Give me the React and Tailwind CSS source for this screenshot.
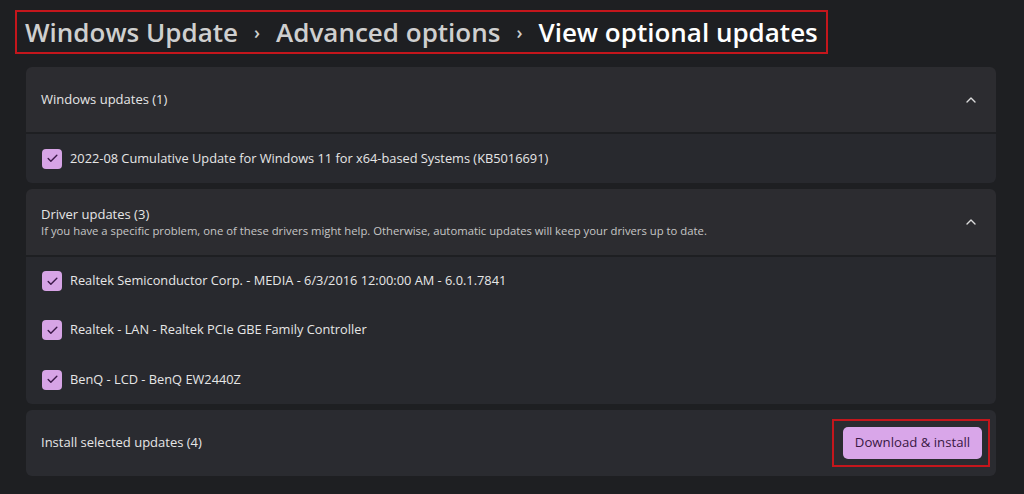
import { ChevronUp, Check } from "lucide-react";

function Box({ checked = true }) {
  return (
    <span className="flex h-[20px] w-[20px] shrink-0 items-center justify-center rounded-[4px] bg-[#d7a4e6]">
      {checked && <Check size={13} strokeWidth={2.6} className="text-[#3b1848]" />}
    </span>
  );
}

function Row({ children }) {
  return (
    <div className="flex items-center gap-[8px] pl-[16px] text-[12.8px] text-[#e6e6e6]">
      <Box />
      <span>{children}</span>
    </div>
  );
}

export default function App() {
  return (
    <div
      className="h-[494px] w-[1024px] overflow-hidden bg-[#1e1f22]"
      style={{ fontFamily: '"Segoe UI", "Open Sans", sans-serif' }}
    >
      <div className="pl-[15px] pt-[10px]">
        <div className="inline-flex h-[44px] items-center gap-[16px] border-2 border-[#c4161c] pl-[8px] pr-[8px] text-[26px] font-semibold">
          <span className="text-[#cfcfcf]">Windows Update</span>
          <span className="text-[18px] text-[#cfcfcf]">›</span>
          <span className="text-[#cfcfcf]">Advanced options</span>
          <span className="text-[18px] text-[#cfcfcf]">›</span>
          <span className="text-white">View optional updates</span>
        </div>
      </div>

      <div className="mx-[26px] mt-[13px] flex w-[970px] flex-col gap-[6px]">
        <div className="flex flex-col gap-[2px]">
          <div className="flex h-[65px] items-center justify-between rounded-t-[6px] bg-[#2c2c30] px-[15px] text-[13px] text-[#e6e6e6]">
            <span>Windows updates (1)</span>
            <ChevronUp size={16} strokeWidth={2} className="mr-[2px] text-[#dcdcdc]" />
          </div>
          <div className="flex h-[49px] flex-col justify-center rounded-b-[6px] bg-[#28292e]">
            <Row>2022-08 Cumulative Update for Windows 11 for x64-based Systems (KB5016691)</Row>
          </div>
        </div>

        <div className="flex flex-col gap-[2px]">
          <div className="flex h-[66px] items-center justify-between rounded-t-[6px] bg-[#2c2c30] px-[15px]">
            <div className="flex flex-col">
              <span className="text-[13px] leading-[18px] text-[#e6e6e6]">Driver updates (3)</span>
              <span className="text-[11.3px] leading-[16px] text-[#c6c6c6]">
                If you have a specific problem, one of these drivers might help. Otherwise, automatic updates will keep your drivers up to date.
              </span>
            </div>
            <ChevronUp size={16} strokeWidth={2} className="mr-[2px] text-[#dcdcdc]" />
          </div>
          <div className="flex flex-col rounded-b-[6px] bg-[#28292e]">
            <div className="flex h-[48px] flex-col justify-center">
              <Row>Realtek Semiconductor Corp. - MEDIA - 6/3/2016 12:00:00 AM - 6.0.1.7841</Row>
            </div>
            <div className="flex h-[50px] flex-col justify-center">
              <Row>Realtek - LAN - Realtek PCIe GBE Family Controller</Row>
            </div>
            <div className="flex h-[49px] flex-col justify-center">
              <Row>BenQ - LCD - BenQ EW2440Z</Row>
            </div>
          </div>
        </div>

        <div className="flex h-[66px] items-center justify-between rounded-[6px] bg-[#2a2b30] pl-[15px] pr-[6px]">
          <span className="text-[13px] text-[#e6e6e6]">Install selected updates (4)</span>
          <div className="border-2 border-[#c4161c] py-[6px] pl-[9px] pr-[6px]">
            <button className="h-[32px] w-[139px] rounded-[5px] bg-[#d9a6e9] text-[13.2px] text-[#3a1844]">
              Download &amp; install
            </button>
          </div>
        </div>
      </div>
    </div>
  );
}
